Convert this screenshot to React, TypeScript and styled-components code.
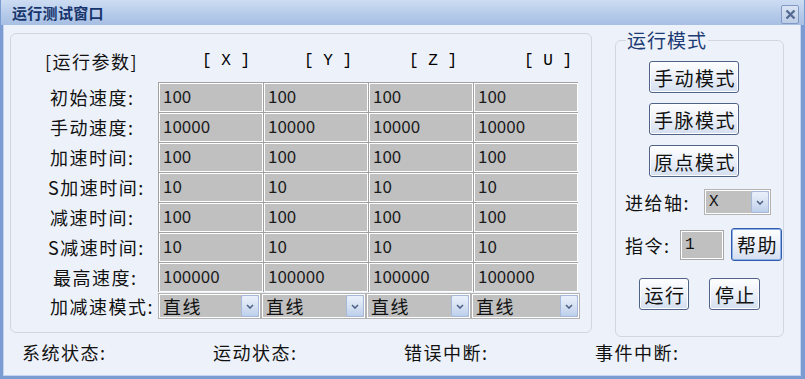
import styled, { createGlobalStyle } from 'styled-components'

const GlobalStyle = createGlobalStyle`
  html, body {
    margin: 0;
    padding: 0;
  }
  body {
    width: 805px;
    height: 379px;
    overflow: hidden;
    background: #edf1f9;
    font-family: "Noto Sans CJK SC", sans-serif;
  }
`

const AXES = [
  { name: 'X', indent: 44 },
  { name: 'Y', indent: 41 },
  { name: 'Z', indent: 41 },
  { name: 'U', indent: 51 },
]

const PARAMS = [
  { label: '初始速度:', indent: 39, values: ['100', '100', '100', '100'] },
  { label: '手动速度:', indent: 39, values: ['10000', '10000', '10000', '10000'] },
  { label: '加速时间:', indent: 39, values: ['100', '100', '100', '100'] },
  { label: 'S加速时间:', indent: 37, values: ['10', '10', '10', '10'] },
  { label: '减速时间:', indent: 39, values: ['100', '100', '100', '100'] },
  { label: 'S减速时间:', indent: 37, values: ['10', '10', '10', '10'] },
  { label: '最高速度:', indent: 42, values: ['100000', '100000', '100000', '100000'] },
]

const MODES = ['手动模式', '手脉模式', '原点模式']
const STATUS = ['系统状态:', '运动状态:', '错误中断:', '事件中断:']

const Chevron = () => (
  <svg width="8" height="5" viewBox="0 0 8 5">
    <polyline points="1,1 4,4 7,1" fill="none" stroke="#4f6386" strokeWidth="1.6" />
  </svg>
)

const DropDown = ({ text, width, mono }: { text: string; width: number; mono?: boolean }) => (
  <SelectBox $w={width}>
    <SelectText $mono={mono}>{text}</SelectText>
    <DropButton>
      <Chevron />
    </DropButton>
  </SelectBox>
)

const App = () => {
  return (
    <>
      <GlobalStyle />
      <Window>
        <TitleBar>
          <Title>运行测试窗口</Title>
          <CloseButton>
            <svg width="11" height="11" viewBox="0 0 11 11">
              <path d="M1.5 1.5 L9.5 9.5 M9.5 1.5 L1.5 9.5" stroke="#566b93" strokeWidth="2.4" />
            </svg>
          </CloseButton>
        </TitleBar>

        <Body>
          <Main>
            <ParamFrame>
              <HeaderRow>
                <HeaderLabel>[运行参数]</HeaderLabel>
                {AXES.map((a) => (
                  <AxisHead key={a.name} $indent={a.indent}>[ {a.name} ]</AxisHead>
                ))}
              </HeaderRow>

              <ParamGrid>
                {PARAMS.map((p) => (
                  <ParamRow key={p.label}>
                    <RowLabel $indent={p.indent}>{p.label}</RowLabel>
                    {p.values.map((v, i) => (
                      <ValueCell key={i}>{v}</ValueCell>
                    ))}
                  </ParamRow>
                ))}
              </ParamGrid>

              <SelectRow>
                <RowLabel $indent={39}>加减速模式:</RowLabel>
                <DropDown text="直线" width={103} />
                <DropDown text="直线" width={105} />
                <DropDown text="直线" width={105} />
                <DropDown text="直线" width={109} />
              </SelectRow>
            </ParamFrame>

            <ModeFrame>
              <ModeLegend>运行模式</ModeLegend>
              <ModeBody>
                <ModeButtons>
                  {MODES.map((m) => (
                    <WinButton key={m} $w={90} $h={32}>{m}</WinButton>
                  ))}
                </ModeButtons>

                <FieldRow $top={12}>
                  <FieldLabel $w={79}>进给轴:</FieldLabel>
                  <DropDown text="X" width={67} mono />
                </FieldRow>

                <FieldRow $top={13}>
                  <FieldLabel $w={55}>指令:</FieldLabel>
                  <CmdInput>1</CmdInput>
                  <WinButton $w={51} $h={33} $focused>帮助</WinButton>
                </FieldRow>

                <RunRow>
                  <WinButton $w={50} $h={32}>运行</WinButton>
                  <WinButton $w={51} $h={32}>停止</WinButton>
                </RunRow>
              </ModeBody>
            </ModeFrame>
          </Main>

          <StatusBar>
            {STATUS.map((s) => (
              <StatusItem key={s}>{s}</StatusItem>
            ))}
          </StatusBar>
        </Body>
      </Window>
    </>
  )
}

export default App

const Window = styled.div`
  width: 805px;
  height: 379px;
  display: flex;
  flex-direction: column;
  box-sizing: border-box;
`

const TitleBar = styled.div`
  height: 25px;
  flex-shrink: 0;
  display: flex;
  align-items: center;
  justify-content: space-between;
  padding: 0 5px 0 11px;
  background: linear-gradient(180deg, #cddcf2 0%, #b6cbea 55%, #a7bfe3 100%);
  border-left: 1px solid #7b9bd3;
  border-right: 1px solid #7b9bd3;
`

const Title = styled.div`
  font-size: 15px;
  font-weight: 700;
  color: #17356c;
  letter-spacing: 0.3px;
`

const CloseButton = styled.div`
  width: 16px;
  height: 17px;
  margin-top: 3px;
  display: flex;
  align-items: center;
  justify-content: center;
  border: 1px solid #8199c4;
  border-radius: 2px;
  background: linear-gradient(180deg, #dae4f3 0%, #bccde7 100%);
`

const Body = styled.div`
  flex: 1;
  display: flex;
  flex-direction: column;
  padding: 4px 0 0 7px;
  background: #edf1f9;
  border-left: 3px solid #7b9bd3;
  border-right: 4px solid #7b9bd3;
  border-bottom: 3px solid #7b9bd3;
  box-shadow: inset 1px 0 0 #c5d4ee, inset -1px 0 0 #c5d4ee, inset 0 -1px 0 #c5d4ee;
`

const Main = styled.div`
  display: flex;
  align-items: flex-start;
  gap: 23px;
`

const ParamFrame = styled.div`
  width: 582px;
  height: 300px;
  margin-top: 4px;
  box-sizing: border-box;
  padding-top: 16px;
  border: 1px solid #d0d7e3;
  border-radius: 6px;
`

const HeaderRow = styled.div`
  display: flex;
  height: 22px;
  margin-bottom: 10px;
  align-items: center;
`

const HeaderLabel = styled.div`
  width: 147px;
  box-sizing: border-box;
  padding-left: 34px;
  font-size: 18px;
  letter-spacing: 1.5px;
  color: #111;
  white-space: nowrap;
`

const AxisHead = styled.div<{ $indent: number }>`
  width: 105px;
  box-sizing: border-box;
  padding-left: ${(p) => p.$indent}px;
  font-family: "Liberation Mono", monospace;
  font-size: 16px;
  color: #000;
  white-space: pre;
`

const ParamGrid = styled.div`
  display: flex;
  flex-direction: column;
`

const ParamRow = styled.div`
  display: flex;
  height: 30px;
`

const RowLabel = styled.div<{ $indent: number }>`
  width: 147px;
  flex-shrink: 0;
  box-sizing: border-box;
  padding-left: ${(p) => p.$indent}px;
  display: flex;
  align-items: center;
  font-size: 18px;
  letter-spacing: 1.5px;
  color: #111;
  white-space: nowrap;
  overflow: visible;
`

const ValueCell = styled.div`
  width: 105px;
  height: 30px;
  box-sizing: border-box;
  padding: 0 0 0 4px;
  border-top: 1px solid #a2a2a2;
  border-left: 1px solid #a2a2a2;
  box-shadow: inset 0 0 0 1px #fff;
  background: #c0c0c0;
  font-size: 17px;
  line-height: 25px;
  color: #1a1a1a;
`

const SelectRow = styled.div`
  display: flex;
  height: 26px;
  margin-top: 1px;
`

const SelectBox = styled.div<{ $w: number }>`
  width: ${(p) => p.$w}px;
  flex-shrink: 0;
  box-sizing: border-box;
  display: flex;
  align-items: stretch;
  padding: 1px;
  border: 1px solid #b3b3b3;
  box-shadow: inset 0 0 0 1px #fff;
  background: #c0c0c0;
`

const SelectText = styled.div<{ $mono?: boolean }>`
  flex: 1;
  padding-left: 3px;
  font-family: ${(p) => (p.$mono ? '"Liberation Mono", monospace' : '"Noto Sans CJK SC", sans-serif')};
  font-size: ${(p) => (p.$mono ? 16 : 18)}px;
  letter-spacing: 1.5px;
  line-height: 22px;
  color: #111;
`

const DropButton = styled.div`
  width: 18px;
  box-sizing: border-box;
  display: flex;
  align-items: center;
  justify-content: center;
  border: 1px solid #a6b9da;
  border-radius: 2px;
  background: linear-gradient(180deg, #e9f0fa 0%, #d2def1 60%, #bccfeb 100%);
`

const ModeFrame = styled.fieldset`
  width: 169px;
  height: 308px;
  box-sizing: border-box;
  margin: 0;
  padding: 0;
  min-width: 0;
  border: 1px solid #d0d7e3;
  border-radius: 6px;
`

const ModeLegend = styled.legend`
  margin-left: 10px;
  padding: 0 1px;
  font-size: 19px;
  line-height: 22px;
  letter-spacing: 1px;
  color: #1d3b74;
`

const ModeBody = styled.div`
  display: flex;
  flex-direction: column;
  padding-top: 10px;
`

const ModeButtons = styled.div`
  display: flex;
  flex-direction: column;
  gap: 10px;
  padding-left: 33px;
`

const WinButton = styled.button<{ $w: number; $h: number; $focused?: boolean }>`
  width: ${(p) => p.$w}px;
  height: ${(p) => p.$h}px;
  padding: 0 0 0 2px;
  box-sizing: border-box;
  border: 1px solid ${(p) => (p.$focused ? '#2f5db0' : '#4f6287')};
  border-radius: 3px;
  box-shadow: ${(p) => (p.$focused ? 'inset 0 0 0 1px #8eaee4' : 'inset 0 0 0 1px #ffffff')};
  background: linear-gradient(180deg, #fdfeff 0%, #eef2f9 45%, #d3deef 100%);
  font-family: "Noto Sans CJK SC", sans-serif;
  font-size: 19px;
  letter-spacing: 1.5px;
  color: #111;
  flex-shrink: 0;
`

const FieldRow = styled.div<{ $top: number }>`
  display: flex;
  align-items: center;
  margin-top: ${(p) => p.$top}px;
  padding-left: 9px;

  & > button {
    margin-left: 7px;
  }
`

const FieldLabel = styled.div<{ $w: number }>`
  width: ${(p) => p.$w}px;
  flex-shrink: 0;
  font-size: 18px;
  letter-spacing: 1.5px;
  color: #111;
  white-space: nowrap;
`

const CmdInput = styled.div`
  width: 44px;
  height: 30px;
  box-sizing: border-box;
  padding: 3px 0 0 4px;
  border: 1px solid #a8a8a8;
  box-shadow: inset 0 0 0 1px #fff;
  background: #c0c0c0;
  font-family: "Liberation Mono", monospace;
  font-size: 16px;
  line-height: 22px;
  color: #111;
`

const RunRow = styled.div`
  display: flex;
  gap: 20px;
  margin-top: 17px;
  padding-left: 23px;
`

const StatusBar = styled.div`
  display: flex;
  align-items: center;
  height: 30px;
  padding-left: 12px;
`

const StatusItem = styled.div`
  width: 191px;
  font-size: 18px;
  letter-spacing: 1.5px;
  color: #111;
`
